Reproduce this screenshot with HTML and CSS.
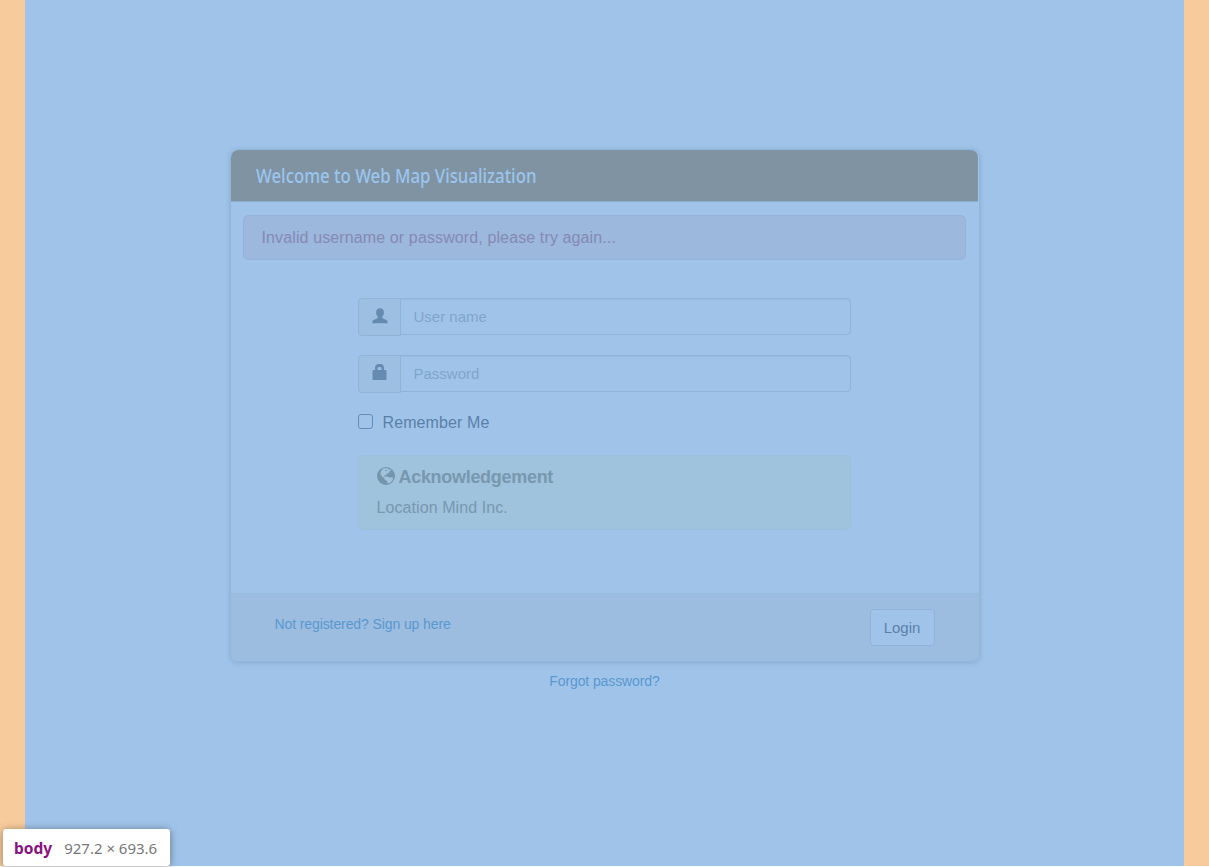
FILE: index.html
```html
<!DOCTYPE html>
<html lang="en">
<head>
<meta charset="utf-8">
<title>Web Map Visualization</title>
<link rel="stylesheet" href="styles.css">
</head>
<body>
<main class="page">
  <section class="panel">
    <header class="panel-head"><h1 class="title">Welcome to Web Map Visualization</h1></header>
    <div class="panel-body">
      <div class="alert">Invalid username or password, please try again...</div>
      <form class="form">
        <div class="group">
          <span class="addon"><svg width="16" height="16" viewBox="0 0 16 16"><path d="M8 .3C10.600.3 12 2 11.900 4.700C11.800 6.500 11.200 7.800 10.300 8.700V9.800C10.500 11 15.700 11.400 15.700 14V15.300H.3V14C.3 11.400 5.500 11 5.700 9.800V8.700C4.800 7.800 4.200 6.500 4.100 4.700C4 2 5.400.3 8 .3Z"/></svg></span>
          <input class="input" type="text" placeholder="User name">
        </div>
        <div class="group">
          <span class="addon lock"><svg width="16" height="16" viewBox="0 0 16 16"><path fill-rule="evenodd" d="M3 6V4C3 1.500 4.500 0 6.500 0H8.500C10.700 0 12 1.500 12 4V6H13.500Q14.500 6 14.500 7V15Q14.500 16 13.500 16H1.500Q.5 16 .5 15V7Q.5 6 1.500 6ZM5.500 6H9.500V4.500Q9.500 3 8 3H7Q5.500 3 5.500 4.500Z"/></svg></span>
          <input class="input" type="password" placeholder="Password">
        </div>
        <label class="remember"><input class="check" type="checkbox"><span class="remember-text">Remember Me</span></label>
        <div class="ack">
          <h2 class="ack-title"><svg class="globe" width="18" height="18" viewBox="0 0 18 18"><circle cx="9" cy="9" r="9"/><path class="land" d="M6.500 1.300L11.500 1.200L11 2.700L13 2.200L14 3.400L12.500 4.300L11.700 6L9.700 6.800L9.200 8.200L7.500 8.300L7 9.400L9 9.500L10.300 9.500L12.700 10.500L15.500 10.300L16 12.500L13.700 15.500L11.500 16.500L10.500 16L10 14L7.500 12.500L7.300 10.900L5 9.500L3.500 7L4 4L5.500 2.500Z"/><path d="M8.500 3L10 3.200L9.500 4.200L8 4Z"/></svg>Acknowledgement</h2>
          <div class="ack-text">Location Mind Inc.</div>
        </div>
      </form>
    </div>
    <footer class="panel-foot">
      <a class="link">Not registered? Sign up here</a>
      <button class="login" type="button">Login</button>
    </footer>
  </section>
  <a class="link forgot">Forgot password?</a>
</main>
<div class="tip"><b class="tip-tag">body</b><span>927.2 × 693.6</span></div>
</body>
</html>
```
FILE: styles.css
```css
* { box-sizing: border-box; }
body { margin: 0; height: 867px; padding: 0 25px; overflow: hidden; background: linear-gradient(#f8cb9c 866px, #fff 866px); font: 16px/24px "Liberation Sans", Arial, sans-serif; }
.page { height: 866px; padding-top: 149px; background: #a0c4e9; display: flex; flex-direction: column; align-items: center; }
.panel { width: 750px; height: 513px; border: 1px solid #91b6db; border-radius: 8px; box-shadow: 0 1px 5px rgba(60, 100, 140, .25); display: flex; flex-direction: column; overflow: hidden; }
.panel-head { width: 747px; height: 52px; flex: none; background: #7f93a3; border-bottom: 1px solid #8baecf; border-radius: 7px 7px 0 0; padding: 0 25px; }
.title { margin: 0; font: 500 19px/53px "Noto Sans", sans-serif; color: #9bc5ee; white-space: nowrap; transform: scaleX(.884); transform-origin: left; }
.panel-body { flex: 1; padding: 13px 12px 0; }
.alert { width: 723px; height: 45px; border: 1px solid #98b2da; border-radius: 5px; background: #9cb8dd; color: #8689b2; padding: 0 18px; line-height: 43px; letter-spacing: .12px; }
.form { width: 493px; margin: 38px 0 0 115px; }
.group { display: flex; height: 38px; margin-bottom: 19px; align-items: flex-start; }
.addon { width: 43px; height: 38px; flex: none; border: 1px solid #90b3d7; border-radius: 4px 0 0 4px; background: #9cbfe2; display: flex; justify-content: center; padding: 9px 0 0 1px; }
.lock { padding-top: 8px; }
.addon svg { fill: #668bb1; }
.input { width: 451px; height: 37px; flex: none; margin-left: -1px; border: 1px solid #90b3d7; border-radius: 0 4px 4px 0; background: #a0c4e9; box-shadow: inset 0 1px 1px rgba(80, 120, 165, .1); padding: 0 13px; font: 15px "Liberation Sans", Arial, sans-serif; outline: none; }
.input::placeholder { color: #80a5ca; opacity: 1; }
.remember { display: flex; align-items: flex-start; height: 24px; margin-top: -2px; color: #5b80a8; gap: 10px; letter-spacing: .1px; }
.remember-text { padding-top: 1px; }
.check { appearance: none; width: 15px; height: 15px; margin: 4px 0 0; border: 1px solid #668cb5; border-radius: 3px; }
.ack { height: 75px; margin-top: 21px; border: 1px solid #9dc0da; border-radius: 5px; background: #9fc2dd; color: #7898ae; padding: 10px 18px; }
.ack-title { display: flex; align-items: center; gap: 4px; height: 22px; margin: 0; font-size: 18px; line-height: 22px; letter-spacing: -.3px; }
.globe { fill: #7595ad; margin-top: -2px; }
.globe .land { fill: #9fc2dd; }
.ack-text { margin-top: 8px; letter-spacing: .08px; }
.panel-foot { height: 68px; border-top: 1px solid #98bbdd; background: #9cbddf; display: flex; justify-content: space-between; align-items: flex-start; padding: 15px 44px; }
.link { font-size: 14px; line-height: 20px; letter-spacing: -.1px; color: #5998d1; }
.panel-foot .link { margin-top: 5px; }
.login { width: 65px; height: 37px; border: 1px solid #90b3d7; border-radius: 4px; background: #a0c4e9; color: #5b80a8; font: 15px "Liberation Sans", Arial, sans-serif; padding: 0; }
.forgot { margin-top: 9px; }
.tip { position: absolute; left: 3px; top: 829px; width: 167px; height: 37px; border-radius: 3px; background: #fff; box-shadow: 0 1px 8px rgba(0, 0, 0, .4); display: flex; gap: 12px; align-items: center; padding: 0 0 0 11px; font: 15px/20px "Noto Sans", sans-serif; color: #777; white-space: nowrap; }
.tip-tag { color: #881280; font-size: 15.5px; }
```
